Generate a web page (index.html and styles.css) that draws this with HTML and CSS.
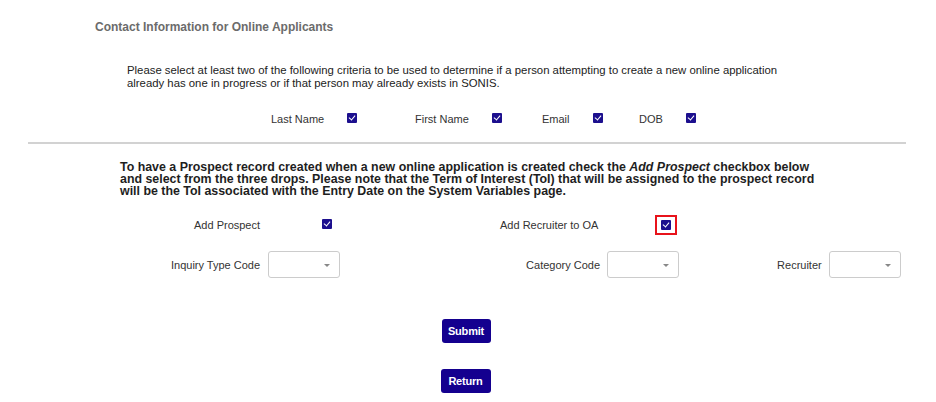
FILE: index.html
```html
<!DOCTYPE html>
<html>
<head>
<meta charset="utf-8">
<link rel="stylesheet" href="styles.css">
</head>
<body>
<div class="page">
  <h1 class="title">Contact Information for Online Applicants</h1>
  <p class="intro">Please select at least two of the following criteria to be used to determine if a person attempting to create a new online application already has one in progress or if that person may already exists in SONIS.</p>
  <div class="criteria">
    <span class="lbl c1">Last Name</span><span class="cb"></span>
    <span class="lbl c2">First Name</span><span class="cb"></span>
    <span class="lbl c3">Email</span><span class="cb"></span>
    <span class="lbl c4">DOB</span><span class="cb"></span>
  </div>
  <hr class="rule">
  <p class="note">To have a Prospect record created when a new online application is created check the <i>Add Prospect</i> checkbox below and select from the three drops. Please note that the Term of Interest (ToI) that will be assigned to the prospect record will be the ToI associated with the Entry Date on the System Variables page.</p>
  <div class="prospect">
    <span class="lbl p1">Add Prospect</span><span class="cb"></span>
    <span class="lbl p2">Add Recruiter to OA</span><span class="focus"><span class="cb"></span></span>
  </div>
  <div class="drops">
    <div class="drop d1"><span class="lbl">Inquiry Type Code</span><span class="select"><span class="caret"></span></span></div>
    <div class="drop d2"><span class="lbl">Category Code</span><span class="select"><span class="caret"></span></span></div>
    <div class="drop d3"><span class="lbl">Recruiter</span><span class="select"><span class="caret"></span></span></div>
  </div>
  <div class="actions">
    <button class="btn">Submit</button>
    <button class="btn ret">Return</button>
  </div>
</div>
</body>
</html>
```
FILE: styles.css
```css
html, body { margin: 0; padding: 0; background: #fff; }
body { font-family: "Liberation Sans", Arial, sans-serif; color: #222; }
.page { width: 936px; height: 402px; overflow: hidden; }
.title { margin: 0; padding: 20px 0 0 95px; font-size: 12px; font-weight: bold; color: #6b6b6b; line-height: 14px; }
.intro { margin: 0; padding: 30px 120px 0 127px; font-size: 11.35px; line-height: 13px; color: #222; }
.criteria { display: flex; align-items: center; padding: 22px 0 0 271px; font-size: 11px; height: 14px; }
.lbl { font-size: 11px; color: #333; line-height: 14px; }
.cb { display: inline-block; width: 10px; height: 10px; background: #1c0f8e; border-radius: 1px; position: relative; }
.cb::after { content: ""; position: absolute; left: 3px; top: 1px; width: 3px; height: 5px; border: solid #fff; border-width: 0 1.6px 1.6px 0; transform: rotate(40deg); }
.criteria .c1 { width: 76px; }
.criteria .c2 { width: 77px; margin-left: 58px; }
.criteria .c3 { width: 51px; margin-left: 40px; }
.criteria .c4 { width: 47px; margin-left: 36px; }
.criteria .cb { margin-top: -2px; }
.rule { margin: 16px 30px 0 28px; border: 0; height: 2px; background: #d2d2d2; }
.note { margin: 0; padding: 17px 116px 0 120px; font-size: 12.4px; line-height: 12px; font-weight: bold; color: #1e1e1e; }
.prospect { display: flex; align-items: center; padding: 19px 0 0 194px; height: 18px; }
.prospect .p1 { width: 128px; }
.prospect .p2 { width: 155px; margin-left: 168px; }
.prospect .cb { margin-top: -2px; }
.focus { display: inline-flex; align-items: center; justify-content: center; width: 18px; height: 16px; border: 2px solid #e8131b; margin-top: -1px; }
.focus .cb { margin-top: 0; }
.drops { display: flex; align-items: center; padding: 17px 0 0 171px; }
.drop { display: flex; align-items: center; gap: 7px; }
.d1 { gap: 8px; }
.d2 { margin-left: 186px; }
.d3 { margin-left: 98px; }
.select { display: inline-block; position: relative; width: 70px; height: 25px; border: 1px solid #ccc; border-radius: 3px; background: #fff; }
.caret { position: absolute; right: 9px; top: 12px; width: 0; height: 0; border-left: 3px solid transparent; border-right: 3px solid transparent; border-top: 3px solid #888; }
.actions { display: flex; flex-direction: column; align-items: center; gap: 26px; padding: 41px 4px 0 0; }
.btn { font-family: "Liberation Sans", Arial, sans-serif; font-size: 11px; font-weight: bold; color: #fff; background: #14008f; border: 0; border-radius: 3px; width: 49px; height: 24px; padding: 0; letter-spacing: -0.2px; }
.ret { margin-left: -1px; width: 50px; }
```
